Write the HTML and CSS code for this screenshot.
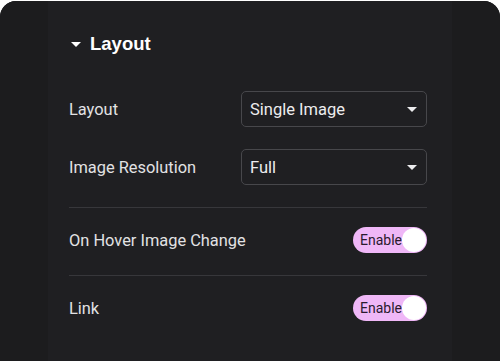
FILE: index.html
```html
<!DOCTYPE html>
<html>
<head>
<meta charset="utf-8">
<link rel="stylesheet" href="styles.css">
</head>
<body>
<div class="card">
  <div class="side"></div>
  <div class="panel">
    <div class="header">
      <span class="tri"></span>
      <span class="title">Layout</span>
    </div>
    <div class="field first">
      <span class="label">Layout</span>
      <div class="select"><span>Single Image</span><span class="caret"></span></div>
    </div>
    <div class="field second">
      <span class="label">Image Resolution</span>
      <div class="select"><span>Full</span><span class="caret"></span></div>
    </div>
    <div class="divider"></div>
    <div class="trow">
      <span class="label">On Hover Image Change</span>
      <div class="toggle"><span class="ttext">Enable</span><span class="knob"></span></div>
    </div>
    <div class="divider"></div>
    <div class="trow">
      <span class="label">Link</span>
      <div class="toggle"><span class="ttext">Enable</span><span class="knob"></span></div>
    </div>
  </div>
  <div class="side"></div>
</div>
</body>
</html>
```
FILE: styles.css
```css
html, body {
  margin: 0;
  padding: 0;
  background: #ffffff;
}
body {
  padding-top: 1px;
  font-family: Roboto, "Liberation Sans", sans-serif;
}
.card {
  display: flex;
  height: 360px;
  border-radius: 16px 16px 0 0;
  overflow: hidden;
  background: #1c1c1e;
}
.side {
  width: 48px;
  background: #1c1c1e;
}
.panel {
  width: 404px;
  background: #1f1f22;
  padding: 28px 25px 0 21px;
  box-sizing: border-box;
  display: flex;
  flex-direction: column;
}
.header {
  height: 30px;
  display: flex;
  align-items: center;
}
.tri {
  width: 0;
  height: 0;
  border-left: 5px solid transparent;
  border-right: 5px solid transparent;
  border-top: 5px solid #ffffff;
  margin-left: 2px;
  margin-right: 9px;
  margin-top: 1px;
}
.title {
  color: #ffffff;
  font-family: "Liberation Sans", Arial, sans-serif;
  font-weight: 700;
  font-size: 18.5px;
}
.field {
  display: flex;
  align-items: center;
  height: 36px;
}
.field.first { margin-top: 32px; }
.field.second { margin-top: 22px; }
.label {
  color: #e2e2e4;
  font-size: 16.4px;
}
.field .label {
  width: 172px;
}
.select {
  flex: 1;
  height: 36px;
  box-sizing: border-box;
  border: 1px solid #47474b;
  border-radius: 5px;
  display: flex;
  align-items: center;
  justify-content: space-between;
  padding: 0 9px 0 8px;
  color: #ececee;
  font-size: 16.5px;
}
.caret {
  width: 0;
  height: 0;
  border-left: 5px solid transparent;
  border-right: 5px solid transparent;
  border-top: 5px solid #ececee;
}
.divider {
  height: 1px;
  background: #37373b;
  margin-top: 22px;
}
.trow + .divider { margin-top: 0; }
.trow {
  display: flex;
  align-items: center;
  justify-content: space-between;
  padding: 19px 0 22px;
}
.toggle {
  width: 74px;
  height: 26px;
  border-radius: 13px;
  background: #efb7f7;
  display: flex;
  align-items: center;
  justify-content: space-between;
  padding: 0 1px 0 7px;
  box-sizing: border-box;
}
.ttext {
  color: #2a1a2e;
  font-size: 14px;
}
.knob {
  width: 24px;
  height: 24px;
  border-radius: 50%;
  background: #ffffff;
}
```
